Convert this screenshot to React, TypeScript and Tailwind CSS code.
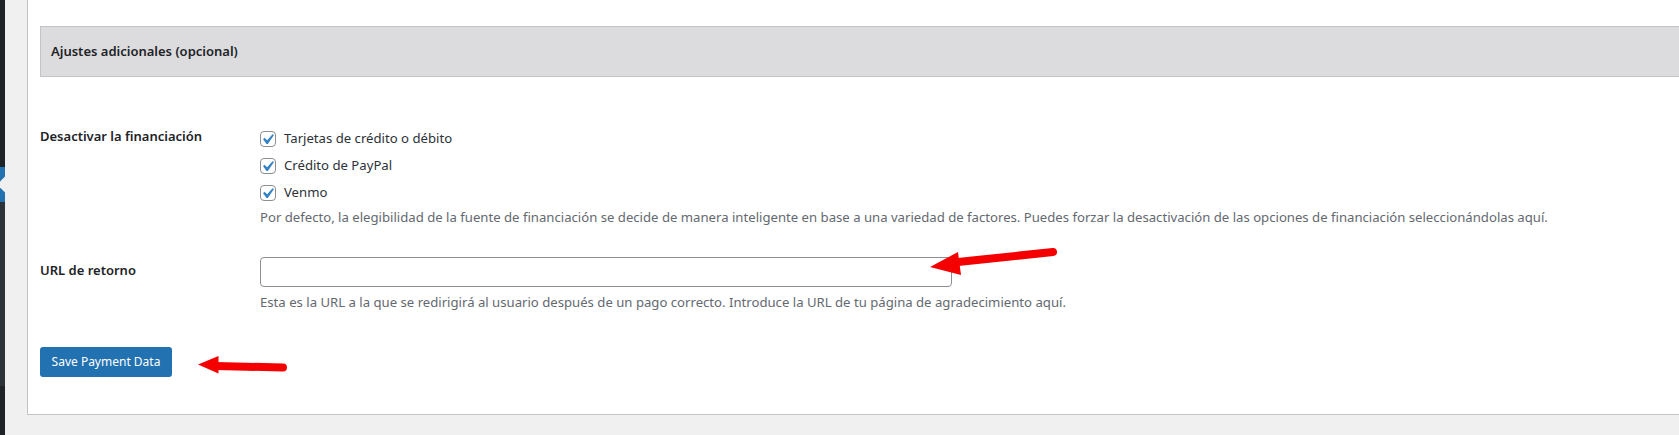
import React from "react";

function Check() {
  return (
    <span className="flex h-4 w-4 shrink-0 items-center justify-center rounded-[4px] border border-[#8c8f94] bg-white">
      <svg width="14" height="14" viewBox="3.81 2.86 13.33 13.33">
        <path
          d="M14.83 4.89l1.34.94-5.81 8.38H9.02L5.78 9.67l1.34-1.25 2.57 2.4z"
          fill="#3582c4"
        />
      </svg>
    </span>
  );
}

function CheckRow({ label }: { label: string }) {
  return (
    <label className="flex h-[27px] items-center gap-2 text-[13.15px] text-[#2c3338]">
      <Check />
      <span>{label}</span>
    </label>
  );
}

export default function App() {
  return (
    <div className="relative flex h-[435px] w-[1679px] overflow-hidden bg-[#f0f0f1] font-['Noto_Sans',sans-serif]">
      {/* admin sidebar edge */}
      <div className="flex w-[5px] shrink-0 flex-col">
        <div className="h-[167px] bg-[#1d2327]" />
        <div className="h-[35px] bg-[#2271b1]">
          <svg width="5" height="35" viewBox="0 0 5 35" className="block">
            <polygon points="5,9.5 -3,17.5 5,25.5" fill="#f0f0f1" />
          </svg>
        </div>
        <div className="h-[184px] bg-[#2c3338]" />
        <div className="flex-1 bg-[#1d2327]" />
      </div>

      {/* gutter */}
      <div className="w-[22px] shrink-0" />

      {/* panel */}
      <div className="flex h-[415px] w-[1700px] shrink-0 flex-col border-b border-l border-[#c3c4c7] bg-white pl-[12px] pt-[26px]">
        <div className="flex h-[51px] items-center border border-[#c3c4c7] bg-[#dcdcde] pl-[10px] text-[13px] font-semibold text-[#1d2327]">
          Ajustes adicionales (opcional)
        </div>

        {/* row 1 */}
        <div className="mt-[48px] flex">
          <div className="mt-[1px] w-[220px] shrink-0 text-[13px] font-semibold leading-[20px] text-[#1d2327]">
            Desactivar la financiación
          </div>
          <div className="flex flex-col">
            <CheckRow label="Tarjetas de crédito o débito" />
            <CheckRow label="Crédito de PayPal" />
            <CheckRow label="Venmo" />
            <p className="mt-[1px] text-[13.15px] leading-[20px] text-[#646970]">
              Por defecto, la elegibilidad de la fuente de financiación se decide de manera inteligente en base a una variedad de factores. Puedes forzar la desactivación de las opciones de financiación seleccionándolas aquí.
            </p>
          </div>
        </div>

        {/* row 2 */}
        <div className="mt-[30px] flex">
          <div className="mt-[3px] w-[220px] shrink-0 text-[13px] font-semibold leading-[20px] text-[#1d2327]">
            URL de retorno
          </div>
          <div className="flex flex-col">
            <input
              type="text"
              className="h-[30px] w-[692px] rounded-[4px] border border-[#8c8f94] bg-white px-2 text-[13px] outline-none"
            />
            <p className="mt-[5px] text-[13.15px] leading-[20px] text-[#646970]">
              Esta es la URL a la que se redirigirá al usuario después de un pago correcto. Introduce la URL de tu página de agradecimiento aquí.
            </p>
          </div>
        </div>

        <div className="mt-[35px]">
          <button className="flex h-[30px] w-[132px] items-center justify-center rounded-[3px] bg-[#2271b1] text-[12px] text-white">
            Save Payment Data
          </button>
        </div>
      </div>

      {/* annotation arrows */}
      <svg
        className="pointer-events-none absolute left-0 top-0"
        width="1679"
        height="435"
        viewBox="0 0 1679 435"
      >
        <line x1="958" y1="262" x2="1053" y2="252" stroke="#f50000" strokeWidth="8" strokeLinecap="round" />
        <polygon points="930,267 958,252 961,275" fill="#f50000" />
        <line x1="216" y1="366" x2="283" y2="367.5" stroke="#f50000" strokeWidth="8" strokeLinecap="round" />
        <polygon points="198,364.5 218.5,356 218.5,373.5" fill="#f50000" />
      </svg>
    </div>
  );
}
